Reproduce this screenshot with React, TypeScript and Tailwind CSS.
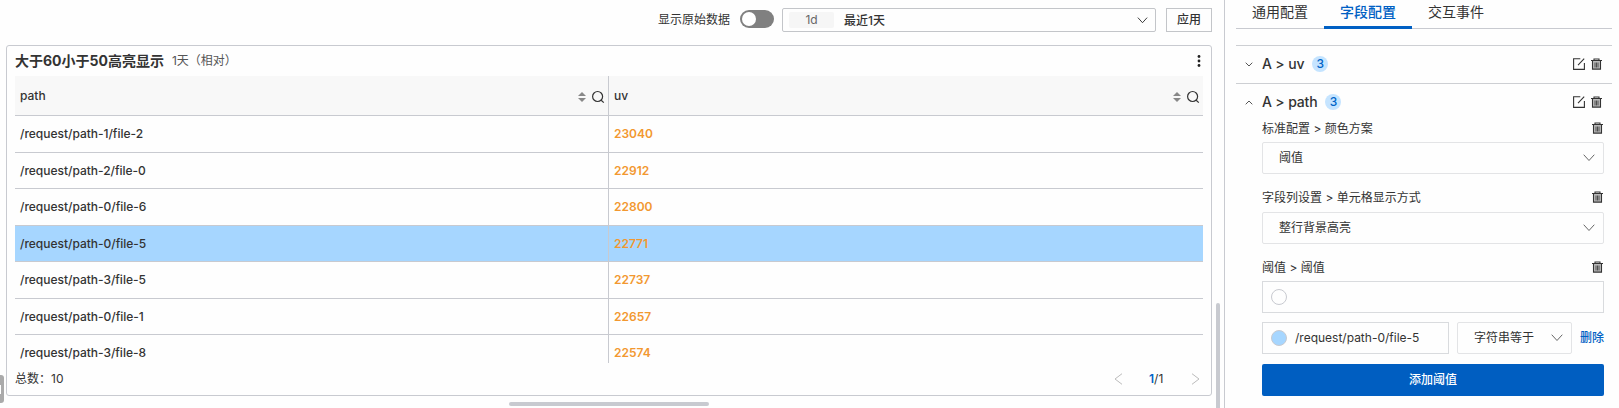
import React from 'react';

type Row = { path: string; uv: string; height: string; active?: boolean };

const rows: Row[] = [
  { path: '/request/path-1/file-2', uv: '23040', height: 'h-[37px]' },
  { path: '/request/path-2/file-0', uv: '22912', height: 'h-[36px]' },
  { path: '/request/path-0/file-6', uv: '22800', height: 'h-[37px]' },
  { path: '/request/path-0/file-5', uv: '22771', height: 'h-[36px]', active: true },
  { path: '/request/path-3/file-5', uv: '22737', height: 'h-[37px]' },
  { path: '/request/path-0/file-1', uv: '22657', height: 'h-[36px]' },
  { path: '/request/path-3/file-8', uv: '22574', height: 'h-[37px]' },
];

function Chevron({ className, d = 'M.7 .7L6 6.5L11.3 .7', box = '0 0 12 8' }: { className: string; d?: string; box?: string }) {
  return (
    <svg viewBox={box} className={`shrink-0 ${className}`} fill="none" stroke="currentColor" strokeWidth="1">
      <path d={d} />
    </svg>
  );
}

function SearchIcon() {
  return (
    <svg viewBox="0 0 14 14" className="size-[14px] shrink-0 text-[#333]" fill="none" stroke="currentColor" strokeWidth="1.2">
      <circle cx="6.6" cy="6.5" r="5" />
      <path d="M10.2 10.2l2.6 2.4" />
    </svg>
  );
}

function SortIcon() {
  return (
    <svg viewBox="0 0 8 10" className="h-[10px] w-2 shrink-0 text-[#888]" fill="currentColor">
      <path d="M0 4l4-4 4 4zM0 6l4 4 4-4z" />
    </svg>
  );
}

function TrashIcon() {
  return (
    <svg viewBox="0 0 11 12" className="h-3 w-[11px] shrink-0 text-[#333]" fill="none" stroke="currentColor" strokeWidth="1.1">
      <path d="M2 3h7v8H2z" fill="#bbb" stroke="none" />
      <path d="M0 2.5h11M3 2.3V1h5v1.3M1.5 2.5v8.6h8V2.5" />
      <path d="M4 4.5v5M5.5 4.5v5M7 4.5v5" strokeWidth=".8" />
    </svg>
  );
}

function EditIcon() {
  return (
    <svg viewBox="0 0 12 12" className="size-3 shrink-0 text-[#333]" fill="none" stroke="currentColor" strokeWidth="1.1">
      <path d="M7.3 .7H.6v10.7h10.8V5M5 7.2L11.2.7" />
    </svg>
  );
}

function HeaderCell({ label }: { label: string }) {
  return (
    <>
      <span className="flex-1 font-medium">{label}</span>
      <span className="mt-[2px] flex items-center gap-[5px]">
        <SortIcon />
        <SearchIcon />
      </span>
    </>
  );
}

function FieldHeader({ title, open }: { title: string; open?: boolean }) {
  return (
    <div className="flex h-[37px] items-center pr-[10px] pb-[1px] pl-[9px] text-sm font-medium text-[#333]">
      <Chevron
        className="mr-[9px] h-[5px] w-2 text-[#555]"
        box="0 0 8 5"
        d={open ? 'M.7 4.3L4 1l3.3 3.3' : 'M.7.7L4 4 7.3.7'}
      />
      <span className="-mt-px tracking-[-0.15px]">{title}</span>
      <span className="ml-2 flex size-4 items-center justify-center rounded-full bg-[#c5e4ff] text-xs text-[#0064c8]">3</span>
      <span className="ml-auto flex items-center gap-[6px]">
        <EditIcon />
        <TrashIcon />
      </span>
    </div>
  );
}

function SettingLabel({ text }: { text: string }) {
  return (
    <div className="flex h-[18px] items-center justify-between pr-[1px]">
      <span className="pt-[2px]">{text}</span>
      <TrashIcon />
    </div>
  );
}

function SelectBox({ text }: { text: string }) {
  return (
    <div className="flex h-8 items-center justify-between rounded-xs border border-[#e3e4e6] pr-2 pl-4">
      <span>{text}</span>
      <Chevron className="h-2 w-3 text-[#666]" />
    </div>
  );
}

export default function App() {
  return (
    <div className="relative flex h-[408px] w-[1619px] overflow-hidden bg-[#fefefe] font-['Inter','Noto_Sans_CJK_SC',sans-serif] text-xs text-[#333]">
      <main className="flex w-[1224px] shrink-0 flex-col pr-3 pl-[6px]">
        <div className="flex h-[45px] items-start justify-end pt-2">
          <div className="flex h-6 items-center">
            <span className="mr-[10px]">显示原始数据</span>
            <span className="mr-2 mb-[2px] flex h-[18px] w-[34px] items-center rounded-full bg-[#808080] pl-0.5">
              <span className="size-[14px] rounded-full bg-white" />
            </span>
            <div className="flex h-6 w-[374px] items-center rounded-xs border border-[#c3c5c9] pr-[7px] pl-[6px]">
              <span className="flex h-4 w-[45px] items-center justify-center rounded-xs bg-[#f6f6f6] text-[#666]">1d</span>
              <span className="ml-[10px] flex-1 pt-px font-medium">最近1天</span>
              <Chevron className="h-[7px] w-[11px] text-[#222]" />
            </div>
            <button className="ml-[10px] h-6 w-[46px] border border-[#c3c5c9] font-medium">应用</button>
          </div>
        </div>

        <section className="flex h-[351px] flex-col rounded-[3px] border border-[#c8cad0] px-2">
          <div className="flex h-[30px] items-center">
            <h1 className="text-sm font-bold">大于60小于50高亮显示</h1>
            <span className="ml-2 text-[#555]">1天（相对）</span>
            <svg viewBox="0 0 4 12" className="mr-0.5 ml-auto h-3 w-1 text-[#222]" fill="currentColor">
              <circle cx="2" cy="1.5" r="1.4" />
              <circle cx="2" cy="6" r="1.4" />
              <circle cx="2" cy="10.5" r="1.4" />
            </svg>
          </div>
          <div className="h-[287px] overflow-hidden">
            <div className="flex h-10 border-b border-[#c8cad0] bg-[#f8f8f8]">
              <div className="flex w-[594px] items-center border-r border-[#c8cad0] pr-[3px] pl-[5px]">
                <HeaderCell label="path" />
              </div>
              <div className="flex flex-1 items-center pr-[3px] pl-[5px]">
                <HeaderCell label="uv" />
              </div>
            </div>
            {rows.map((row) => (
              <div
                key={row.path}
                className={`flex border-b border-[#c8cad0] font-medium ${row.height} ${row.active ? 'bg-[#a6d6ff]' : ''}`}
              >
                <div className="flex w-[594px] items-center border-r border-[#c8cad0] pl-[5px] tracking-[-0.02px]">{row.path}</div>
                <div className="flex flex-1 items-center pl-[5px] font-semibold text-[#f29830]">{row.uv}</div>
              </div>
            ))}
          </div>
          <div className="flex h-8 items-center">
            <span>总数：10</span>
            <Chevron className="ml-auto h-3 w-[9px] text-[#bbb]" box="0 0 9 12" d="M8 .7L1 6l7 5.3" />
            <span className="mx-[26px] w-4">
              <span className="font-semibold text-[#0064c8]">1</span>/1
            </span>
            <Chevron className="mr-[3px] h-3 w-[9px] text-[#bbb]" box="0 0 9 12" d="M1 .7L8 6l-7 5.3" />
          </div>
        </section>
      </main>

      <aside className="flex flex-1 flex-col border-l border-[#c8cad0] pr-[7px] pl-[11px]">
        <nav className="flex h-[29px] border-b border-[#c8cad0] text-sm">
          <span className="h-[29px] px-4 pt-[2px]">通用配置</span>
          <span className="h-[29px] border-b-3 border-[#0060c4] px-4 pt-[2px] font-medium text-[#0060c4]">字段配置</span>
          <span className="h-[29px] px-4 pt-[2px]">交互事件</span>
        </nav>
        <div className="mt-4 border-y border-[#cdcfd3]">
          <FieldHeader title="A > uv" />
        </div>
        <FieldHeader title="A > path" open />
        <div className="flex flex-col pr-2 pl-[26px]">
          <div className="-mt-[2px] mb-1 h-[18px]">
            <SettingLabel text="标准配置 > 颜色方案" />
          </div>
          <div className="mt-[1px]">
            <SelectBox text="阈值" />
          </div>
          <div className="mt-[14px] mb-[6px]">
            <SettingLabel text="字段列设置 > 单元格显示方式" />
          </div>
          <SelectBox text="整行背景高亮" />
          <div className="mt-[14px] mb-[5px]">
            <SettingLabel text="阈值 > 阈值" />
          </div>
          <div className="flex h-8 items-center border border-[#d9dbde] pl-2">
            <span className="size-4 rounded-full border border-[#c8cad0]" />
          </div>
          <div className="mt-[9px] flex items-center">
            <div className="flex h-8 w-[187px] items-center border border-[#d9dbde] pl-2">
              <span className="mr-2 size-4 rounded-full border border-[#c8cad0] bg-[#a6d6ff]" />
              /request/path-0/file-5
            </div>
            <div className="ml-2 w-[115px]">
              <SelectBox text="字符串等于" />
            </div>
            <a className="ml-2 font-medium text-[#0060c4]">删除</a>
          </div>
          <button className="mt-[10px] h-8 rounded-xs bg-[#005ec1] font-medium text-white">添加阈值</button>
        </div>
      </aside>

      <div className="absolute top-[303px] left-[1216px] h-[110px] w-1 rounded-full bg-[#c8cad0]" />
      <div className="absolute top-[402px] left-[509px] h-1 w-[200px] rounded-full bg-[#c8cad0]" />
      <div className="absolute top-[375px] left-0 flex h-7 w-1 items-center rounded-r-[3px] bg-[#aaa]">
        <span className="h-[9px] w-[1px] bg-white" />
      </div>
    </div>
  );
}
